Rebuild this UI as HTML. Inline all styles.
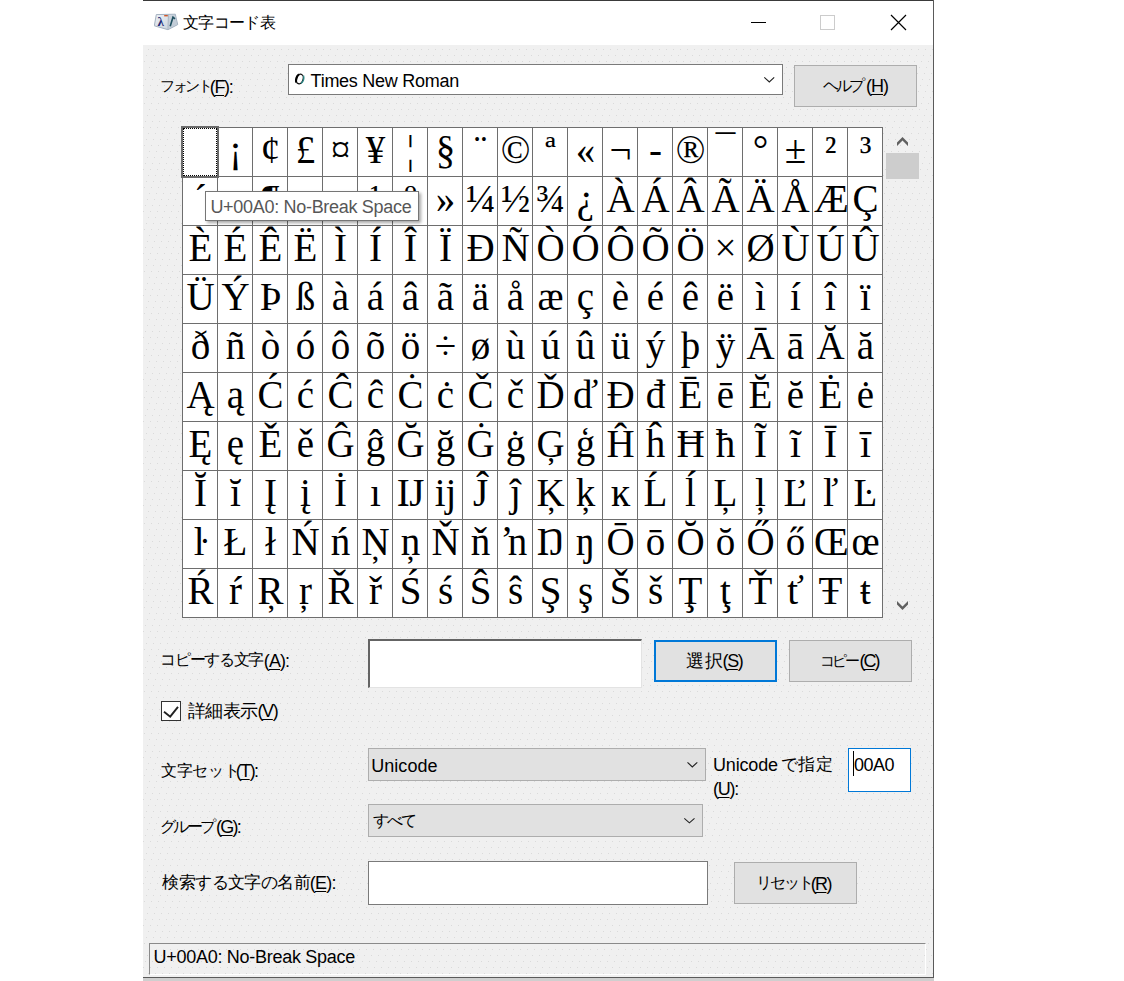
<!DOCTYPE html>
<html><head><meta charset="utf-8">
<style>
*{margin:0;padding:0;box-sizing:border-box}
html,body{width:1124px;height:981px;background:#fff;overflow:hidden;position:relative;font-family:"Liberation Sans",sans-serif;color:#000}
.a{position:absolute}
#win{left:143px;top:0;width:791px;height:978px;background:#f0f0f0}
#topline{left:143px;top:0;width:791px;height:1px;background:#3a3a3a}
#title{left:143px;top:1px;width:790px;height:44px;background:#fff}
#rb{left:933px;top:0;width:1px;height:978px;background:#5a5a5a}
#bb{left:143px;top:977px;width:791px;height:1px;background:#5a5a5a}
#shadow{left:143px;top:978px;width:791px;height:3px;background:#cfcfcf}
.t{font-size:18px;line-height:20px;white-space:nowrap}
#grid{left:182px;top:127px;width:701px;height:491px;background:#fff}
.c{position:absolute;width:35px;height:49px;text-align:center;font-family:"Liberation Serif",serif;font-size:39px;line-height:45px;padding-left:2px}
.vl{position:absolute;top:0;width:1px;height:491px;background:#6e6e6e}
.hl{position:absolute;left:0;height:1px;width:701px;background:#6e6e6e}
.btn{position:absolute;background:#e1e1e1;border:1px solid #adadad}
.edit{position:absolute;background:#fff;border:1px solid #7a7a7a}
u{text-decoration:underline;text-underline-offset:1.5px}
</style></head><body>
<div class="a" id="win"></div>
<div class="a" id="title"></div>
<svg class="a" style="left:143px;top:45px" width="790" height="932"><defs><pattern id="dp" width="7" height="42" patternUnits="userSpaceOnUse"><g fill="#dadada"><rect x="5" y="4" width="1" height="1"/><rect x="3" y="10" width="1" height="1"/><rect x="1" y="16" width="1" height="1"/><rect x="6" y="22" width="1" height="1"/><rect x="4" y="28" width="1" height="1"/><rect x="2" y="34" width="1" height="1"/><rect x="0" y="40" width="1" height="1"/></g></pattern></defs><rect width="790" height="932" fill="url(#dp)"/></svg>
<div class="a" id="topline"></div>
<div class="a" id="rb"></div>
<div class="a" id="bb"></div>
<div class="a" id="shadow"></div>

<svg class="a" style="left:154px;top:12px" width="25" height="20" viewBox="0 0 25 20">
<defs><linearGradient id="ig" x1="0" y1="0" x2="1" y2="1"><stop offset="0" stop-color="#eef2f6"/><stop offset="1" stop-color="#c3cdd8"/></linearGradient></defs>
<path d="M2.3 2.6 L21.3 2.2 L23.7 12.6 L14 17.7 L0.3 13.8 Z" fill="url(#ig)" stroke="#9aa9ba" stroke-width="0.9"/>
<path d="M14.5 3 L14 17.5" stroke="#aeb9c6" stroke-width="1.2"/>
<path d="M15 3.5 L21 3 L23 12.3 L14.5 16.5 Z" fill="#b9c4d0" opacity="0.6"/>
<text x="3.6" y="14.2" font-family="Liberation Serif" font-size="13" font-weight="bold" fill="#1c2a78">λ</text>
<path d="M16.2 14.2 L19 5.2 L21 6.8" stroke="#1f5060" stroke-width="1.6" fill="none"/>
<rect x="10.2" y="3" width="3.6" height="1.4" fill="#d0582a"/>
</svg>
<div class="a" style="left:751px;top:22px;width:15px;height:1px;background:#000"></div>
<div class="a" style="left:820px;top:15px;width:15px;height:15px;border:1px solid #cccccc"></div>
<svg class="a" style="left:890px;top:14px" width="17" height="17" viewBox="0 0 17 17"><path d="M1 1 L16 16 M16 1 L1 16" stroke="#000" stroke-width="1.2"/></svg>

<div class="edit" style="left:288px;top:64px;width:495px;height:31px"></div>
<svg class="a" style="left:293px;top:72px" width="14" height="14" viewBox="0 0 14 14"><ellipse cx="6.8" cy="7" rx="3.3" ry="4.9" transform="rotate(18 6.8 7)" fill="none" stroke="#111" stroke-width="1.3"/><path d="M3.2 10.6 C2.6 8 3.4 4 6 2.4" stroke="#000" stroke-width="2.2" fill="none"/><path d="M10.6 3.6 C11.2 6 10.4 9.6 8 11.4" stroke="#2a8a8a" stroke-width="1.3" fill="none"/></svg>
<svg class="a" style="left:763px;top:76px" width="13" height="8" viewBox="0 0 13 8"><path d="M1.3 1.3 L6.3 6 L11.2 1.3" stroke="#222" stroke-width="1.1" fill="none"/></svg>
<div class="btn" style="left:794px;top:65px;width:123px;height:42px"></div>

<div class="a" id="grid">
<div class="vl" style="left:0px"></div>
<div class="vl" style="left:35px"></div>
<div class="vl" style="left:70px"></div>
<div class="vl" style="left:105px"></div>
<div class="vl" style="left:140px"></div>
<div class="vl" style="left:175px"></div>
<div class="vl" style="left:210px"></div>
<div class="vl" style="left:245px"></div>
<div class="vl" style="left:280px"></div>
<div class="vl" style="left:315px"></div>
<div class="vl" style="left:350px"></div>
<div class="vl" style="left:385px"></div>
<div class="vl" style="left:420px"></div>
<div class="vl" style="left:455px"></div>
<div class="vl" style="left:490px"></div>
<div class="vl" style="left:525px"></div>
<div class="vl" style="left:560px"></div>
<div class="vl" style="left:595px"></div>
<div class="vl" style="left:630px"></div>
<div class="vl" style="left:665px"></div>
<div class="vl" style="left:700px"></div>
<div class="hl" style="top:0px"></div>
<div class="hl" style="top:49px"></div>
<div class="hl" style="top:98px"></div>
<div class="hl" style="top:147px"></div>
<div class="hl" style="top:196px"></div>
<div class="hl" style="top:245px"></div>
<div class="hl" style="top:294px"></div>
<div class="hl" style="top:343px"></div>
<div class="hl" style="top:392px"></div>
<div class="hl" style="top:441px"></div>
<div class="hl" style="top:490px"></div>
<div class="c" style="left:0px;top:0px"></div>
<div class="c" style="left:35px;top:0px">¡</div>
<div class="c" style="left:70px;top:0px">¢</div>
<div class="c" style="left:105px;top:0px">£</div>
<div class="c" style="left:140px;top:0px">¤</div>
<div class="c" style="left:175px;top:0px">¥</div>
<div class="c" style="left:210px;top:0px">¦</div>
<div class="c" style="left:245px;top:0px">§</div>
<div class="c" style="left:280px;top:0px">¨</div>
<div class="c" style="left:315px;top:0px">©</div>
<div class="c" style="left:350px;top:0px">ª</div>
<div class="c" style="left:385px;top:0px">«</div>
<div class="c" style="left:420px;top:0px">¬</div>
<div class="c" style="left:455px;top:0px">-</div>
<div class="c" style="left:490px;top:0px">®</div>
<div class="c" style="left:525px;top:0px">¯</div>
<div class="c" style="left:560px;top:0px">°</div>
<div class="c" style="left:595px;top:0px">±</div>
<div class="c" style="left:630px;top:0px">²</div>
<div class="c" style="left:665px;top:0px">³</div>
<div class="c" style="left:0px;top:49px">´</div>
<div class="c" style="left:35px;top:49px">µ</div>
<div class="c" style="left:70px;top:49px">¶</div>
<div class="c" style="left:105px;top:49px">·</div>
<div class="c" style="left:140px;top:49px">¸</div>
<div class="c" style="left:175px;top:49px">¹</div>
<div class="c" style="left:210px;top:49px">º</div>
<div class="c" style="left:245px;top:49px">»</div>
<div class="c" style="left:280px;top:49px">¼</div>
<div class="c" style="left:315px;top:49px">½</div>
<div class="c" style="left:350px;top:49px">¾</div>
<div class="c" style="left:385px;top:49px">¿</div>
<div class="c" style="left:420px;top:49px">À</div>
<div class="c" style="left:455px;top:49px">Á</div>
<div class="c" style="left:490px;top:49px">Â</div>
<div class="c" style="left:525px;top:49px">Ã</div>
<div class="c" style="left:560px;top:49px">Ä</div>
<div class="c" style="left:595px;top:49px">Å</div>
<div class="c" style="left:630px;top:49px">Æ</div>
<div class="c" style="left:665px;top:49px">Ç</div>
<div class="c" style="left:0px;top:98px">È</div>
<div class="c" style="left:35px;top:98px">É</div>
<div class="c" style="left:70px;top:98px">Ê</div>
<div class="c" style="left:105px;top:98px">Ë</div>
<div class="c" style="left:140px;top:98px">Ì</div>
<div class="c" style="left:175px;top:98px">Í</div>
<div class="c" style="left:210px;top:98px">Î</div>
<div class="c" style="left:245px;top:98px">Ï</div>
<div class="c" style="left:280px;top:98px">Ð</div>
<div class="c" style="left:315px;top:98px">Ñ</div>
<div class="c" style="left:350px;top:98px">Ò</div>
<div class="c" style="left:385px;top:98px">Ó</div>
<div class="c" style="left:420px;top:98px">Ô</div>
<div class="c" style="left:455px;top:98px">Õ</div>
<div class="c" style="left:490px;top:98px">Ö</div>
<div class="c" style="left:525px;top:98px">×</div>
<div class="c" style="left:560px;top:98px">Ø</div>
<div class="c" style="left:595px;top:98px">Ù</div>
<div class="c" style="left:630px;top:98px">Ú</div>
<div class="c" style="left:665px;top:98px">Û</div>
<div class="c" style="left:0px;top:147px">Ü</div>
<div class="c" style="left:35px;top:147px">Ý</div>
<div class="c" style="left:70px;top:147px">Þ</div>
<div class="c" style="left:105px;top:147px">ß</div>
<div class="c" style="left:140px;top:147px">à</div>
<div class="c" style="left:175px;top:147px">á</div>
<div class="c" style="left:210px;top:147px">â</div>
<div class="c" style="left:245px;top:147px">ã</div>
<div class="c" style="left:280px;top:147px">ä</div>
<div class="c" style="left:315px;top:147px">å</div>
<div class="c" style="left:350px;top:147px">æ</div>
<div class="c" style="left:385px;top:147px">ç</div>
<div class="c" style="left:420px;top:147px">è</div>
<div class="c" style="left:455px;top:147px">é</div>
<div class="c" style="left:490px;top:147px">ê</div>
<div class="c" style="left:525px;top:147px">ë</div>
<div class="c" style="left:560px;top:147px">ì</div>
<div class="c" style="left:595px;top:147px">í</div>
<div class="c" style="left:630px;top:147px">î</div>
<div class="c" style="left:665px;top:147px">ï</div>
<div class="c" style="left:0px;top:196px">ð</div>
<div class="c" style="left:35px;top:196px">ñ</div>
<div class="c" style="left:70px;top:196px">ò</div>
<div class="c" style="left:105px;top:196px">ó</div>
<div class="c" style="left:140px;top:196px">ô</div>
<div class="c" style="left:175px;top:196px">õ</div>
<div class="c" style="left:210px;top:196px">ö</div>
<div class="c" style="left:245px;top:196px">÷</div>
<div class="c" style="left:280px;top:196px">ø</div>
<div class="c" style="left:315px;top:196px">ù</div>
<div class="c" style="left:350px;top:196px">ú</div>
<div class="c" style="left:385px;top:196px">û</div>
<div class="c" style="left:420px;top:196px">ü</div>
<div class="c" style="left:455px;top:196px">ý</div>
<div class="c" style="left:490px;top:196px">þ</div>
<div class="c" style="left:525px;top:196px">ÿ</div>
<div class="c" style="left:560px;top:196px">Ā</div>
<div class="c" style="left:595px;top:196px">ā</div>
<div class="c" style="left:630px;top:196px">Ă</div>
<div class="c" style="left:665px;top:196px">ă</div>
<div class="c" style="left:0px;top:245px">Ą</div>
<div class="c" style="left:35px;top:245px">ą</div>
<div class="c" style="left:70px;top:245px">Ć</div>
<div class="c" style="left:105px;top:245px">ć</div>
<div class="c" style="left:140px;top:245px">Ĉ</div>
<div class="c" style="left:175px;top:245px">ĉ</div>
<div class="c" style="left:210px;top:245px">Ċ</div>
<div class="c" style="left:245px;top:245px">ċ</div>
<div class="c" style="left:280px;top:245px">Č</div>
<div class="c" style="left:315px;top:245px">č</div>
<div class="c" style="left:350px;top:245px">Ď</div>
<div class="c" style="left:385px;top:245px">ď</div>
<div class="c" style="left:420px;top:245px">Đ</div>
<div class="c" style="left:455px;top:245px">đ</div>
<div class="c" style="left:490px;top:245px">Ē</div>
<div class="c" style="left:525px;top:245px">ē</div>
<div class="c" style="left:560px;top:245px">Ĕ</div>
<div class="c" style="left:595px;top:245px">ĕ</div>
<div class="c" style="left:630px;top:245px">Ė</div>
<div class="c" style="left:665px;top:245px">ė</div>
<div class="c" style="left:0px;top:294px">Ę</div>
<div class="c" style="left:35px;top:294px">ę</div>
<div class="c" style="left:70px;top:294px">Ě</div>
<div class="c" style="left:105px;top:294px">ě</div>
<div class="c" style="left:140px;top:294px">Ĝ</div>
<div class="c" style="left:175px;top:294px">ĝ</div>
<div class="c" style="left:210px;top:294px">Ğ</div>
<div class="c" style="left:245px;top:294px">ğ</div>
<div class="c" style="left:280px;top:294px">Ġ</div>
<div class="c" style="left:315px;top:294px">ġ</div>
<div class="c" style="left:350px;top:294px">Ģ</div>
<div class="c" style="left:385px;top:294px">ģ</div>
<div class="c" style="left:420px;top:294px">Ĥ</div>
<div class="c" style="left:455px;top:294px">ĥ</div>
<div class="c" style="left:490px;top:294px">Ħ</div>
<div class="c" style="left:525px;top:294px">ħ</div>
<div class="c" style="left:560px;top:294px">Ĩ</div>
<div class="c" style="left:595px;top:294px">ĩ</div>
<div class="c" style="left:630px;top:294px">Ī</div>
<div class="c" style="left:665px;top:294px">ī</div>
<div class="c" style="left:0px;top:343px">Ĭ</div>
<div class="c" style="left:35px;top:343px">ĭ</div>
<div class="c" style="left:70px;top:343px">Į</div>
<div class="c" style="left:105px;top:343px">į</div>
<div class="c" style="left:140px;top:343px">İ</div>
<div class="c" style="left:175px;top:343px">ı</div>
<div class="c" style="left:210px;top:343px">Ĳ</div>
<div class="c" style="left:245px;top:343px">ĳ</div>
<div class="c" style="left:280px;top:343px">Ĵ</div>
<div class="c" style="left:315px;top:343px">ĵ</div>
<div class="c" style="left:350px;top:343px">Ķ</div>
<div class="c" style="left:385px;top:343px">ķ</div>
<div class="c" style="left:420px;top:343px">ĸ</div>
<div class="c" style="left:455px;top:343px">Ĺ</div>
<div class="c" style="left:490px;top:343px">ĺ</div>
<div class="c" style="left:525px;top:343px">Ļ</div>
<div class="c" style="left:560px;top:343px">ļ</div>
<div class="c" style="left:595px;top:343px">Ľ</div>
<div class="c" style="left:630px;top:343px">ľ</div>
<div class="c" style="left:665px;top:343px">Ŀ</div>
<div class="c" style="left:0px;top:392px">ŀ</div>
<div class="c" style="left:35px;top:392px">Ł</div>
<div class="c" style="left:70px;top:392px">ł</div>
<div class="c" style="left:105px;top:392px">Ń</div>
<div class="c" style="left:140px;top:392px">ń</div>
<div class="c" style="left:175px;top:392px">Ņ</div>
<div class="c" style="left:210px;top:392px">ņ</div>
<div class="c" style="left:245px;top:392px">Ň</div>
<div class="c" style="left:280px;top:392px">ň</div>
<div class="c" style="left:315px;top:392px">ŉ</div>
<div class="c" style="left:350px;top:392px">Ŋ</div>
<div class="c" style="left:385px;top:392px">ŋ</div>
<div class="c" style="left:420px;top:392px">Ō</div>
<div class="c" style="left:455px;top:392px">ō</div>
<div class="c" style="left:490px;top:392px">Ŏ</div>
<div class="c" style="left:525px;top:392px">ŏ</div>
<div class="c" style="left:560px;top:392px">Ő</div>
<div class="c" style="left:595px;top:392px">ő</div>
<div class="c" style="left:630px;top:392px">Œ</div>
<div class="c" style="left:665px;top:392px">œ</div>
<div class="c" style="left:0px;top:441px">Ŕ</div>
<div class="c" style="left:35px;top:441px">ŕ</div>
<div class="c" style="left:70px;top:441px">Ŗ</div>
<div class="c" style="left:105px;top:441px">ŗ</div>
<div class="c" style="left:140px;top:441px">Ř</div>
<div class="c" style="left:175px;top:441px">ř</div>
<div class="c" style="left:210px;top:441px">Ś</div>
<div class="c" style="left:245px;top:441px">ś</div>
<div class="c" style="left:280px;top:441px">Ŝ</div>
<div class="c" style="left:315px;top:441px">ŝ</div>
<div class="c" style="left:350px;top:441px">Ş</div>
<div class="c" style="left:385px;top:441px">ş</div>
<div class="c" style="left:420px;top:441px">Š</div>
<div class="c" style="left:455px;top:441px">š</div>
<div class="c" style="left:490px;top:441px">Ţ</div>
<div class="c" style="left:525px;top:441px">ţ</div>
<div class="c" style="left:560px;top:441px">Ť</div>
<div class="c" style="left:595px;top:441px">ť</div>
<div class="c" style="left:630px;top:441px">Ŧ</div>
<div class="c" style="left:665px;top:441px">ŧ</div>
</div>
<div class="a" style="left:181px;top:126px;width:38px;height:52px;border:2px solid #6a6a6a"></div>
<div class="a" style="left:183px;top:128px;width:34px;height:48px;border:1px dotted #000"></div>

<svg class="a" style="left:896px;top:136px" width="13" height="11" viewBox="0 0 13 11"><path d="M6.5 1 L12 6.5 L12 10 L6.5 4.5 L1 10 L1 6.5 Z" fill="#606060"/></svg>
<div class="a" style="left:886px;top:153px;width:33px;height:26px;background:#cdcdcd"></div>
<svg class="a" style="left:896px;top:600px" width="13" height="11" viewBox="0 0 13 11"><path d="M1 1 L6.5 6.5 L12 1 L12 4.5 L6.5 10 L1 4.5 Z" fill="#606060"/></svg>

<div class="a" style="left:205px;top:191px;width:214px;height:30px;background:#fff;border:1px solid #767676;box-shadow:2px 2px 3px rgba(0,0,0,0.35)"></div>

<div class="a" style="left:368px;top:639px;width:274px;height:49px;background:#fff;border-top:2px solid #646464;border-left:2px solid #646464;border-right:1px solid #e3e3e3;border-bottom:1px solid #e3e3e3"></div>
<div class="btn" style="left:654px;top:640px;width:123px;height:42px;border:2px solid #0078d7"></div>
<div class="btn" style="left:789px;top:640px;width:123px;height:42px"></div>

<div class="a" style="left:161px;top:701px;width:20px;height:20px;border:1px solid #333;background:#fff"></div>
<svg class="a" style="left:161px;top:701px" width="20" height="20" viewBox="0 0 20 20"><path d="M3 10.8 L9.2 15.7 L17 5.9" stroke="#222" stroke-width="1.9" fill="none"/></svg>

<div class="btn" style="left:368px;top:748px;width:338px;height:33px"></div>
<svg class="a" style="left:686px;top:761px" width="13" height="8" viewBox="0 0 13 8"><path d="M1.5 1.3 L6.3 6 L11.3 1.3" stroke="#222" stroke-width="1.1" fill="none"/></svg>
<div class="a" style="left:848px;top:748px;width:63px;height:44px;background:#fff;border:1px solid #0078d7"></div>
<div class="a" style="left:853px;top:751px;width:1px;height:25px;background:#000"></div>

<div class="btn" style="left:368px;top:804px;width:335px;height:33px"></div>
<svg class="a" style="left:683px;top:817px" width="13" height="8" viewBox="0 0 13 8"><path d="M1.3 1.3 L6.4 5.8 L11.5 1.3" stroke="#222" stroke-width="1.1" fill="none"/></svg>

<div class="edit" style="left:368px;top:861px;width:340px;height:44px"></div>
<div class="btn" style="left:734px;top:862px;width:123px;height:42px"></div>

<div class="a" style="left:149px;top:943px;width:777px;height:32px;border-top:1px solid #8a8a8a;border-left:1px solid #8a8a8a;border-right:1px solid #fff;border-bottom:1px solid #fff"></div>
<div class="a t" id="ttl" style="left:183.00px;top:13px;letter-spacing:-0.700px;font-size:16px">文字コード表</div>
<div class="a t" id="fontlbl_j" style="left:160.00px;top:76px;letter-spacing:-2.267px;font-size:15px">フォント</div>
<div class="a t" id="fontlbl_l" style="left:209.80px;top:77px;letter-spacing:-1.367px">(<u>F</u>):</div>
<div class="a t" id="times" style="left:310.60px;top:71px;letter-spacing:-0.271px">Times New Roman</div>
<div class="a t" id="help_j" style="left:823.00px;top:76px;letter-spacing:-2.800px;font-size:15.5px">ヘルプ</div>
<div class="a t" id="help_l" style="left:866.00px;top:76px;letter-spacing:-1.000px">(<u>H</u>)</div>
<div class="a t" id="copylbl_j" style="left:160.20px;top:650px;letter-spacing:-1.283px;font-size:16px">コピーする文字</div>
<div class="a t" id="copylbl_l" style="left:263.80px;top:651px;letter-spacing:-0.900px">(<u>A</u>):</div>
<div class="a t" id="selbtn_j" style="left:686.40px;top:651px;letter-spacing:0.800px;font-size:18px">選択</div>
<div class="a t" id="selbtn_l" style="left:722.60px;top:651px;letter-spacing:-1.400px">(<u>S</u>)</div>
<div class="a t" id="copybtn_j" style="left:819.60px;top:651px;letter-spacing:-2.400px;font-size:15px">コピー</div>
<div class="a t" id="copybtn_l" style="left:859.40px;top:651px;letter-spacing:-1.900px">(<u>C</u>)</div>
<div class="a t" id="detail_j" style="left:187.60px;top:701px;letter-spacing:-0.433px;font-size:18px">詳細表示</div>
<div class="a t" id="detail_l" style="left:257.40px;top:701px;letter-spacing:-1.300px">(<u>V</u>)</div>
<div class="a t" id="cslbl_j" style="left:161.20px;top:761px;letter-spacing:-0.375px;font-size:16px">文字セット</div>
<div class="a t" id="cslbl_l" style="left:235.80px;top:761px;letter-spacing:-1.567px">(<u>T</u>):</div>
<div class="a t" id="grplbl_j" style="left:160.20px;top:817px;letter-spacing:-2.833px;font-size:15.5px">グループ</div>
<div class="a t" id="grplbl_l" style="left:216.00px;top:817px;letter-spacing:-1.733px">(<u>G</u>):</div>
<div class="a t" id="unicode" style="left:371.20px;top:756px;letter-spacing:0.050px">Unicode</div>
<div class="a t" id="all" style="left:372.60px;top:811px;letter-spacing:-1.900px;font-size:16px">すべて</div>
<div class="a t" id="unilbl_l" style="left:713.00px;top:755px;letter-spacing:-0.167px">Unicode</div>
<div class="a t" id="unilbl_j" style="left:781.00px;top:755px;letter-spacing:0.250px;font-size:17px">で指定</div>
<div class="a t" id="ulbl" style="left:713.00px;top:779px;letter-spacing:-1.233px">(<u>U</u>):</div>
<div class="a t" id="hex" style="left:854.00px;top:755px;letter-spacing:-0.500px">00A0</div>
<div class="a t" id="srchlbl_j" style="left:162.20px;top:872px;letter-spacing:-0.550px;font-size:16.5px">検索する文字の名前</div>
<div class="a t" id="srchlbl_l" style="left:309.80px;top:873px;letter-spacing:-0.800px">(<u>E</u>):</div>
<div class="a t" id="reset_j" style="left:756.00px;top:873px;letter-spacing:-1.867px;font-size:16px">リセット</div>
<div class="a t" id="reset_l" style="left:810.80px;top:874px;letter-spacing:-1.700px">(<u>R</u>)</div>
<div class="a t" id="status" style="left:153.60px;top:947px;letter-spacing:-0.286px">U+00A0: No-Break Space</div>
<div class="a t" id="tip" style="left:210.40px;top:197px;letter-spacing:-0.300px;color:#575757">U+00A0: No-Break Space</div>
</body></html>
